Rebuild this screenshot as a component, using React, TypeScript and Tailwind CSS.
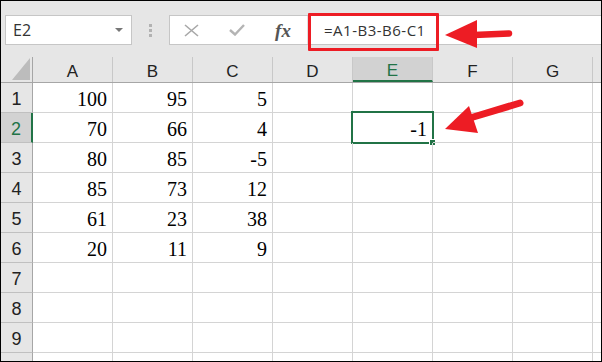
import React from "react";

const cols = ["A", "B", "C", "D", "E", "F", "G", ""];
const data: (number | null)[][] = [
  [100, 95, 5],
  [70, 66, 4],
  [80, 85, -5],
  [85, 73, 12],
  [61, 23, 38],
  [20, 11, 9],
  [],
  [],
  [],
  [],
];

const Toolbar = () => {
  return (
    <div className="h-[56px] shrink-0 bg-[#e6e6e6] flex items-start pt-[14px] pl-[4px]">
      <div className="w-[127px] h-[30px] bg-white border border-[#c6c6c6] flex items-center justify-between pl-[7px] pr-[8px]">
        <span className="text-[16px] text-[#333] font-['Open_Sans',sans-serif] leading-none">E2</span>
        <svg width="8" height="5" viewBox="0 0 8 5">
          <polygon points="0,0 8,0 4,4" fill="#777" />
        </svg>
      </div>
      <div className="w-[37px] h-[30px] flex flex-col items-center justify-center gap-[2px]">
        <span className="w-[3px] h-[3px] bg-[#b2b2b2]" />
        <span className="w-[3px] h-[3px] bg-[#b2b2b2]" />
        <span className="w-[3px] h-[3px] bg-[#b2b2b2]" />
      </div>
      <div className="relative flex-1 h-[30px] bg-white border-y border-l border-[#c6c6c6] flex items-center">
        <div className="w-[43px] flex justify-center">
          <svg width="15" height="13" viewBox="0 0 15 13">
            <path d="M1 1 L14 12 M14 1 L1 12" stroke="#a8a8a8" strokeWidth="1.6" />
          </svg>
        </div>
        <div className="w-[48px] flex justify-center">
          <svg width="16" height="12" viewBox="0 0 16 12">
            <path d="M1 6 L6 10.5 L15 1" stroke="#b4b4b4" strokeWidth="2.4" fill="none" />
          </svg>
        </div>
        <div className="w-[44px] flex justify-center">
          <span className="text-[19px] italic font-semibold text-[#555] font-['Liberation_Serif',serif] leading-none">
            fx
          </span>
        </div>
        <div className="h-full w-px bg-[#e0e0e0] ml-[2px]" />
        <span className="ml-[16px] text-[15px] tracking-[0.5px] text-[#333] font-['Open_Sans',sans-serif] leading-none">
          =A1-B3-B6-C1
        </span>
        <div className="absolute left-[138px] top-[-3px] w-[131px] h-[38px] border-[3px] border-[#ed1c24] rounded-[1px]" />
      </div>
    </div>
  );
};

const HeaderRow = () => {
  return (
    <div className="flex h-[26px] shrink-0 bg-[#e6e6e6] border-b border-[#a6a6a6]">
      <div className="relative w-[32px] border-r border-[#a6a6a6]">
        <svg className="absolute right-[2px] bottom-[2px]" width="18" height="22" viewBox="0 0 18 22">
          <polygon points="18,0 18,22 0,22" fill="#bcbcbc" />
        </svg>
      </div>
      {cols.map((c, i) => {
        const sel = c === "E";
        return (
          <div
            key={i}
            className={
              (i === cols.length - 1 ? "w-[8px] " : "w-[80px] border-r border-[#c8c8c8] ") +
              (sel ? "bg-[#d2d2d2] border-b-2 border-b-[#217346] text-[#217346] " : "text-[#222] ") +
              "flex justify-center items-center pt-[4px] text-[17px] font-['Liberation_Sans',sans-serif] leading-none"
            }
          >
            {c}
          </div>
        );
      })}
    </div>
  );
};

const Row = ({ n, values }: { n: number; values: (number | null)[] }) => {
  const selRow = n === 2;
  return (
    <div className="flex h-[30px] shrink-0">
      <div
        className={
          (selRow ? "bg-[#d2d2d2] border-r-2 border-r-[#217346] text-[#217346] " : "bg-[#e6e6e6] border-r border-[#a6a6a6] text-[#222] ") +
          "w-[32px] border-b border-b-[#c0c0c0] flex justify-center items-center pt-[2px] text-[18px] font-['Liberation_Sans',sans-serif] leading-none"
        }
      >
        {n < 10 ? n : ""}
      </div>
      {cols.map((c, i) => {
        const v = selRow && c === "E" ? -1 : values[i];
        const sel = selRow && c === "E";
        return (
          <div
            key={i}
            className={
              (i === cols.length - 1 ? "w-[8px] " : "w-[80px] border-r ") +
              "relative border-b border-[#d4d4d4] flex justify-end items-center pr-[5px] pt-[2px] text-[20px] text-black font-['Liberation_Serif',serif] leading-none"
            }
          >
            {v ?? ""}
            {sel && (
              <div className="absolute left-[-2px] top-[-2px] w-[83px] h-[33px] border-2 border-[#217346]">
                <div className="absolute right-[-4px] bottom-[-4px] w-[7px] h-[7px] bg-[#217346] border border-white" />
              </div>
            )}
          </div>
        );
      })}
    </div>
  );
};

const Arrows = () => {
  return (
    <svg className="absolute -left-px -top-px pointer-events-none" width="602" height="362" viewBox="0 0 602 362">
      <line x1="474" y1="35" x2="509" y2="33.5" stroke="#ed1c24" strokeWidth="6.5" strokeLinecap="round" />
      <polygon points="445,35 477,20 477,48" fill="#ed1c24" />
      <line x1="470" y1="118" x2="520" y2="103" stroke="#ed1c24" strokeWidth="7" strokeLinecap="round" />
      <polygon points="445,129 469,106 478,133" fill="#ed1c24" />
    </svg>
  );
};

const App = () => {
  return (
    <div className="relative w-[602px] h-[362px] border border-black bg-white overflow-hidden flex flex-col">
      <Toolbar />
      <HeaderRow />
      {data.map((r, i) => (
        <Row key={i} n={i + 1} values={r} />
      ))}
      <Arrows />
    </div>
  );
};

export default App;
